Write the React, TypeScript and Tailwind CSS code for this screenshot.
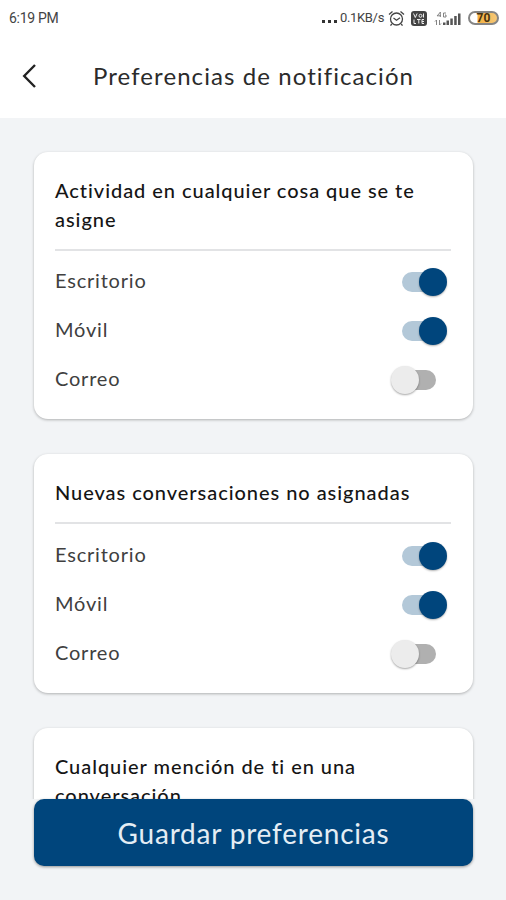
import React, { useState } from 'react';

interface ToggleProps {
    label: string;
    checked: boolean;
    onChange: () => void;
}

const Toggle: React.FC<ToggleProps> = ({ label, checked, onChange }) => (
    <button
        type="button"
        role="switch"
        aria-label={label}
        aria-checked={checked}
        onClick={onChange}
        className={checked ? 'mt-[3px] mr-1 flex h-7 w-[45px] items-center' : 'mt-[3px] mr-[15px] flex h-7 w-[46px] flex-row-reverse items-center'}
    >
        <span className={checked ? 'h-5 w-[28px] shrink-0 rounded-l-full bg-[#b3c8d8]' : 'h-5 w-[28px] shrink-0 rounded-r-full bg-[#b0b0b0]'} />
        <span
            className={
                checked
                    ? 'z-10 -ml-[11px] size-7 shrink-0 rounded-full bg-[#00457c] shadow-[0_1px_2px_rgba(0,0,0,0.3)]'
                    : 'z-10 -mr-[11px] size-7 shrink-0 rounded-full bg-[#ececec] shadow-[0_1px_2px_rgba(0,0,0,0.35)]'
            }
        />
    </button>
);

interface Channel {
    nome: string;
    active: boolean;
}

const defaultChannels: Channel[] = [
    { nome: 'Escritorio', active: true },
    { nome: 'Móvil', active: true },
    { nome: 'Correo', active: false },
];

interface PreferenceCardProps {
    title: string;
    initialChannels?: Channel[];
}

const PreferenceCard: React.FC<PreferenceCardProps> = ({ title, initialChannels = [] }) => {
    const [channels, setChannels] = useState(initialChannels);

    const toggleChannel = (index: number) => {
        setChannels(channels.map((c, i) => (i === index ? { ...c, active: !c.active } : c)));
    };

    return (
        <section className="shrink-0 rounded-[14px] bg-white pt-6 pr-[22px] pb-4 pl-[21px] shadow-[0_1px_3px_rgba(0,0,0,0.28)]">
            <h2 className="text-[20px] leading-[29px] font-medium tracking-[0.95px] text-[#151515]">{title}</h2>
            <div className="mt-[15px] mb-[5px] h-0.5 bg-[#e2e3e5]" />
            {channels.map((channel, index) => (
                <div key={channel.nome} className="flex h-[49.3px] items-center justify-between">
                    <span className="text-[20px] leading-[29px] tracking-[0.8px] text-[#404040]">{channel.nome}</span>
                    <Toggle label={channel.nome} checked={channel.active} onChange={() => toggleChannel(index)} />
                </div>
            ))}
        </section>
    );
};

const StatusBar = () => (
    <div className="flex h-9 items-center pr-[7px] pl-[9px] font-['Roboto',sans-serif] text-[14px] text-[#444]">
        <span className="tracking-[-0.3px]">6:19 PM</span>
        <div className="ml-auto flex items-center">
            <span className="mt-[6px] mr-[3px] flex gap-[3px]">
                <i className="size-[3px] bg-[#333]" />
                <i className="size-[3px] bg-[#333]" />
                <i className="size-[3px] bg-[#333]" />
            </span>
            <span className="text-[13px] tracking-[-0.35px]">0.1KB/s</span>
            <svg className="ml-1" width="17" height="17" viewBox="0 0 17 17" fill="none" stroke="#444" strokeWidth="1.3">
                <circle cx="8.5" cy="9" r="6" />
                <path d="M1 4.5 4.5 1.5M16 4.5 12.5 1.5M3.8 14 2.5 15.7M13.2 14l1.3 1.7M5.5 8l3 2.2L12 7.7" />
            </svg>
            <svg className="ml-[6px]" width="16" height="15" viewBox="0 0 16 15">
                <rect width="16" height="15" rx="3" fill="#444" />
                <path d="m2.5 2.5 1.8 4 1.8-4M8 4.8a1.5 1.5 0 1 0 3 0 1.5 1.5 0 1 0-3 0M12.5 2.5v4M3 8.5v4h2M6 8.5h3.5M7.8 8.5v4M13 8.5h-2v4h2M11 10.5h2" fill="none" stroke="#eee" />
            </svg>
            <svg className="ml-[7px]" width="28" height="15" viewBox="0 0 28 15" fill="#555">
                <path d="M6.3 1v5M3 4.8h4M6.5 1 3.2 4.8M12 2H9.5v4H12V4h-1M2.5 14V9M1 10.5 2.5 9M5.5 9v5L7 12.5" fill="none" stroke="#777" strokeWidth=".9" />
                <path d="M9 11.5h2.5V14H9zM12.5 9.5H15V14h-2.5zM16.3 7.5h2.5V14h-2.5zM20.2 5h2.5v9h-2.5zM24 2.5h2.5V14H24z" />
            </svg>
            <div className="ml-[6px] flex h-[14px] w-[31px] items-center justify-center rounded-full border-2 border-[#858585] bg-linear-to-r from-white from-25% via-[#f4b13f] via-30% to-[#f6c877] text-[12px] leading-none font-bold text-[#493210]">
                70
            </div>
        </div>
    </div>
);

export default function App() {
    return (
        <div className="flex h-[900px] w-[506px] flex-col overflow-hidden bg-[#f2f4f6] font-['Lato',sans-serif]">
            <header className="h-[118px] shrink-0 bg-white">
                <StatusBar />
                <div className="flex h-20 items-center pl-[22px]">
                    <button type="button" aria-label="Volver">
                        <svg width="15" height="26" viewBox="0 0 15 26" fill="none" stroke="#222" strokeWidth="2.4">
                            <path d="M13 2 2.2 13 13 24" />
                        </svg>
                    </button>
                    <h1 className="ml-14 text-[24px] tracking-[1.08px] whitespace-nowrap text-[#2b2b2b]">Preferencias de notificación</h1>
                </div>
            </header>

            <main className="flex h-[681px] shrink-0 flex-col gap-[35px] overflow-hidden pt-[33.5px] pr-[33px] pl-[34px]">
                <PreferenceCard title="Actividad en cualquier cosa que se te asigne" initialChannels={defaultChannels} />
                <PreferenceCard title="Nuevas conversaciones no asignadas" initialChannels={defaultChannels} />
                <PreferenceCard title="Cualquier mención de ti en una conversación" />
            </main>

            <footer className="pr-[33px] pl-[34px]">
                <button
                    type="button"
                    className="h-[67px] w-full rounded-[10px] bg-[#00457c] pt-px text-[28px] tracking-[0.8px] text-[#e4edf4] shadow-[0_1px_3px_rgba(0,0,0,0.4)]"
                >
                    Guardar preferencias
                </button>
            </footer>
        </div>
    );
}
